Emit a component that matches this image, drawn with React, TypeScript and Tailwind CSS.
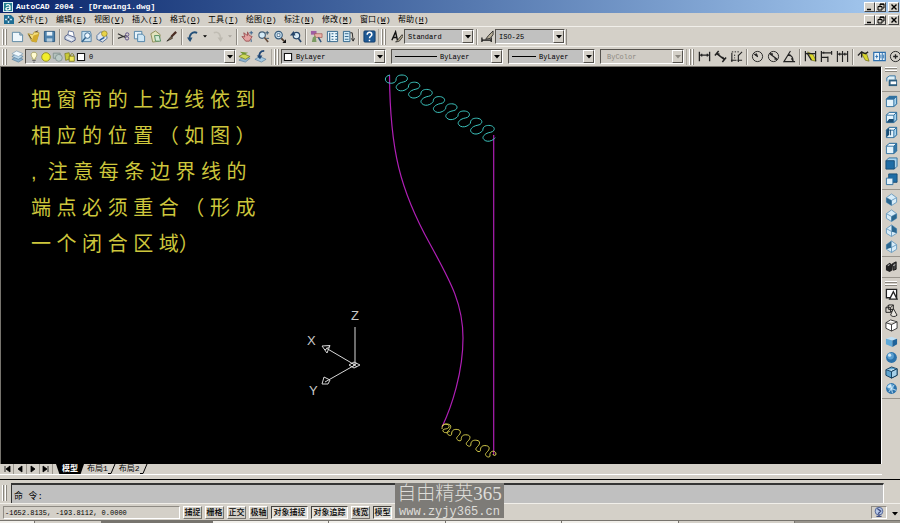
import React from "react";
import clsx from "clsx";

const INK = "#222";
const BLUE = "#2f6f9f";
const SKY = "#a9d4ef";

// 14x14 toolbar glyphs
const glyphs: Record<string, React.ReactNode> = {
  new: (
    <path d="M1.500 2.500h8l3 3v7h-11z M9.500 2.500v3h3" fill="#eef6fb" stroke="#5a86a3" />
  ),
  open: (
    <>
      <path d="M1 4l5 1 2-3 5 1-3 10-5-1z" fill="#f3dc7a" stroke="#a98c2c" strokeWidth=".8" />
      <path d="M5 12l2-6 6-2-3 9z" fill="#d4ab2c" />
      <path d="M9 2l3-1M2 5l3 5" stroke="#58462a" />
    </>
  ),
  save: (
    <>
      <path d="M1.500 1.500h11v11h-11z" fill="#4f83ad" stroke="#2b567d" />
      <path d="M4 2h6v4H4z" fill="#e8f2f8" />
      <path d="M4 9h6v3.500H4z" fill="#b6cddd" />
    </>
  ),
  print: (
    <>
      <path d="M4 6l1-5 5 1 1 5" fill="#fff" stroke="#68789c" />
      <path d="M1 7l3-2 8 3v3l-4 2-7-3z" fill="#d3dbe8" stroke="#4e5c86" />
      <path d="M3 8l6 3" stroke="#fff" />
    </>
  ),
  preview: (
    <>
      <path d="M2 1.500h9l1 3v8H2z" fill="#c8e2f2" stroke="#5784a6" />
      <circle cx="8" cy="6" r="3" fill="#eef8ff" stroke="#35668e" />
      <path d="M6 8l-4 5" stroke="#35668e" strokeWidth="1.600" />
    </>
  ),
  publish: (
    <>
      <path d="M1 6l4-4 6 2 1 5-5 4-6-3z" fill="#dfe6ef" stroke="#52709a" />
      <circle cx="9" cy="4" r="3" fill="#e8d34a" stroke="#8a7a1d" strokeWidth=".7" />
      <path d="M4 11l5-3" stroke="#2f5f99" strokeWidth="1.600" />
    </>
  ),
  cut: (
    <>
      <path d="M1 4l8 4M1 9l9-3" stroke="#333" strokeWidth="1.200" />
      <circle cx="11" cy="4.800" r="1.800" fill="none" stroke="#5b4c86" />
      <circle cx="10.800" cy="9" r="1.800" fill="none" stroke="#5b4c86" />
    </>
  ),
  copy: (
    <>
      <path d="M1.500 1.500h8v8h-8z" fill="#e7f3fa" stroke="#4f83a8" />
      <path d="M5 4.500h5l2.500 2v6H5z" fill="#cfe7f5" stroke="#4f83a8" />
    </>
  ),
  paste: (
    <>
      <path d="M2 4l5-3 5 4-1 7-7 1z" fill="#e2e3bd" stroke="#8d8c55" />
      <path d="M6 6h5l1.500 6H7z" fill="#d7ebd7" stroke="#4f8a5c" />
    </>
  ),
  brush: (
    <>
      <path d="M12 2L7 7" stroke="#4a2c22" strokeWidth="2.400" />
      <path d="M7 6.500L2 12l6-3z" fill="#8a6a48" stroke="#222" strokeWidth=".8" />
    </>
  ),
  undo: (
    <>
      <path d="M12 3C7 1 3 5 4 11" fill="none" stroke="#234f78" strokeWidth="2" />
      <path d="M1 8l3.500 5L7 8z" fill="#234f78" />
    </>
  ),
  redo: (
    <>
      <path d="M3 3c5-2 8 2 7 8" fill="none" stroke="#c1bdb4" strokeWidth="1.800" />
      <path d="M7 8l3.500 5L13 8z" fill="#bdb9b0" />
    </>
  ),
  pan: (
    <>
      <path d="M3 3l4 3V2l2 4 3 1-3 5H5L1 7l3 .5z" fill="#e3a3a1" stroke="#96494c" strokeWidth=".9" />
      <path d="M11 1v4M9 3h4M11 10v3" stroke="#365f8d" />
    </>
  ),
  zoom: (
    <>
      <circle cx="5.500" cy="5.500" r="3.500" fill="#d5ebf7" stroke="#455f78" strokeWidth="1.200" />
      <path d="M8 8l4 5" stroke="#654c3c" strokeWidth="1.800" />
      <path d="M9 3h4M11 1v4M10 9h3" stroke="#30536e" />
    </>
  ),
  zoomWindow: (
    <>
      <circle cx="6" cy="5.500" r="4" fill="#cfe7f5" stroke="#365a7b" strokeWidth="1.200" />
      <path d="M4.500 4h3v3h-3z" fill="#fff" stroke="#365a7b" strokeWidth=".8" />
      <path d="M9 9l3 3" stroke="#4d3a2c" strokeWidth="1.800" />
      <path d="M14 10v4h-4z" fill="#111" />
    </>
  ),
  zoomPrev: (
    <>
      <circle cx="8" cy="6" r="3.500" fill="#d8eaf5" stroke="#27466b" strokeWidth="1.300" />
      <path d="M10 9l3 4" stroke="#27466b" strokeWidth="1.800" />
      <path d="M1 6l4-5 2 5z" fill="#27466b" />
    </>
  ),
  props: (
    <>
      <path d="M1 1h6v4H1z" fill="#9f5fa3" />
      <path d="M5 4h8v4H5z" fill="#e9b3aa" stroke="#9c5048" strokeWidth=".7" />
      <path d="M3 8l3-2 1 7H2z" fill="#7b9b62" />
      <path d="M9 8l3 5" stroke="#31557c" strokeWidth="1.600" />
    </>
  ),
  center: (
    <>
      <path d="M1.500 1.500h11v11h-11z" fill="#e6f4fb" stroke="#2e6389" />
      <path d="M4 3v9M6 4h2M10 4h2M6 7h2M10 7h2M6 10h2M10 10h2" stroke="#2e6389" strokeWidth="1.200" />
    </>
  ),
  palettes: (
    <>
      <path d="M1.500 1.500h7v11h-7z" fill="#d4ebf7" stroke="#2e6389" />
      <path d="M3 4h4M3 7h4M3 10h4" stroke="#2e6389" />
      <path d="M9 3h2l1 8M10 9l2 3 1.500-3" fill="none" stroke="#222" />
    </>
  ),
  help: (
    <>
      <rect x="1" y="1" width="12" height="12" rx="1" fill="#1f5a95" stroke="#123c69" />
      <path d="M4.500 5c0-3.500 5-3.200 5 0 0 1.800-2.500 1.500-2.500 4M7 10.500v1.500" fill="none" stroke="#fff" strokeWidth="1.600" />
    </>
  ),
  textStyle: (
    <>
      <path d="M2 11L6 2l2 9M3.500 8h4" fill="none" stroke="#111" strokeWidth="1.500" />
      <path d="M13 5l-5 6-2 2 4-1 4-5z" fill="#b0a68c" stroke="#222" strokeWidth=".8" />
    </>
  ),
  dimStyle: (
    <>
      <path d="M1 8v5M11 8v5M1 11h10" stroke="#111" strokeWidth="1.300" />
      <path d="M13 1L8 6l-3 4 5-1 3-4z" fill="#b7ae98" stroke="#222" strokeWidth=".9" />
    </>
  ),
  layers: (
    <>
      <path d="M1 10l5-3 7 3-5 3z" fill="#8fb4cf" stroke="#557c9c" strokeWidth=".7" />
      <path d="M1 7l5-3 7 3-5 3z" fill="#bcd8ea" stroke="#557c9c" strokeWidth=".7" />
      <path d="M1 4l5-3 7 3-5 3z" fill="#f1f8fc" stroke="#7b9cb5" strokeWidth=".7" />
    </>
  ),
  layerCurrent: (
    <>
      <path d="M1 11l5-4 7 2-5 4z" fill="#8fb4cf" stroke="#557c9c" strokeWidth=".7" />
      <path d="M1 7l5-3 7 3-5 3z" fill="#cfd95a" stroke="#727a24" strokeWidth=".8" />
      <path d="M2 2l9 1-5 2z" fill="#71962e" />
    </>
  ),
  layerPrev: (
    <>
      <path d="M1 10l5-3 7 3-5 3z" fill="#a6c9e0" stroke="#557c9c" strokeWidth=".7" />
      <path d="M11 1C7 1 5 4 6 8" fill="none" stroke="#1f4674" strokeWidth="2" />
      <path d="M3 6l3.500 4L9 6z" fill="#1f4674" />
    </>
  ),
  bulb: (
    <>
      <path d="M7 1.500c4 0 4 4 2 6v2H5v-2c-2-2-2-6 2-6z" fill="#fffbd0" stroke="#99904a" strokeWidth=".8" />
      <path d="M5 11h4M6 13h2" stroke="#555" />
    </>
  ),
  sun: <circle cx="7" cy="7" r="5" fill="#f2ee2c" stroke="#8c8a1d" />,
  freeze: (
    <>
      <path d="M1.500 2.500h8v6h-8z" fill="#b5c2bd" stroke="#80908d" />
      <circle cx="8" cy="8" r="4" fill="#bccbc7" stroke="#80908d" />
    </>
  ),
  lock: (
    <>
      <path d="M1 3l5-1 1 7-5 2z" fill="#c9c939" stroke="#77761a" strokeWidth=".8" />
      <path d="M6 6h6v6H6z" fill="#f0e85a" stroke="#77761a" />
      <path d="M7.500 6c0-4 4-4 4 0" fill="none" stroke="#77761a" />
    </>
  ),
  swatch: <path d="M2 2h10v10H2z" fill="#fff" stroke="#111" strokeWidth="1.500" />,
  dimLinear: (
    <path d="M1.500 2v10M12.500 2v10M2 5.500h10M4 4v3M10 4v3" fill="none" stroke={INK} strokeWidth="1.400" />
  ),
  dimAligned: (
    <path d="M1 6l4-5M9 13l4-5M3 4l8 6M3 4l3 .5M11 10l-2-2.500" fill="none" stroke={INK} strokeWidth="1.600" />
  ),
  dimOrdinate: (
    <>
      <path d="M2 3v10M1 11h6M9 5v8M8 11h5M9 6l4-4" fill="none" stroke={INK} strokeWidth="1.200" />
      <path d="M2 2h9M5 5v4" stroke={INK} strokeDasharray="1.500 1.500" />
    </>
  ),
  dimRadius: (
    <>
      <circle cx="7" cy="7" r="5.500" fill="none" stroke={INK} />
      <path d="M7.500 7.500L3 4M7 7L6 4 4 5z" fill={INK} stroke={INK} />
    </>
  ),
  dimDiameter: (
    <>
      <circle cx="7" cy="7" r="5.500" fill="none" stroke={INK} />
      <path d="M3 4l8 6M3.500 4l3 .5M10.500 10L8 9.500" stroke={INK} strokeWidth="1.300" />
    </>
  ),
  dimAngular: (
    <path d="M13 12.500H1L8 1M5 6c4-1 6 2 6 6M5 6l3-1M11 12l-2-3" fill="none" stroke={INK} strokeWidth="1.200" />
  ),
  dimQuick: (
    <>
      <path d="M4 2l6 3 3 7-5-1z" fill="#d9d62c" stroke="#66651b" strokeWidth=".7" />
      <path d="M1.500 1v11M12.500 1v11M2 4h10M3 3l5 8" fill="none" stroke={INK} strokeWidth="1.300" />
    </>
  ),
  dimBase: (
    <path d="M1.500 1v12M2 3h11M2 8h6M8.500 7v6M12.500 1v4M4 2v2" fill="none" stroke={INK} strokeWidth="1.300" />
  ),
  dimCont: (
    <path d="M1.500 1v12M7 1v12M12.500 1v12M2 4.500h11M4 3v3M9.500 3v3" fill="none" stroke={INK} strokeWidth="1.200" />
  ),
  leader: (
    <>
      <path d="M5 4l5-1 3 9-4-1z" fill="#d9d62c" stroke="#66651b" strokeWidth=".7" />
      <path d="M1 6l4-4 4 2 3-2M5 2v6" fill="none" stroke={INK} strokeWidth="1.400" />
    </>
  ),
  tolerance: (
    <>
      <path d="M.8 2.500h12.400v9H.8z" fill="#eaf4fb" stroke="#2d6fae" strokeWidth="1.300" />
      <path d="M7 3v8M10 3v8" stroke="#2d6fae" />
      <path d="M2.500 7h3M4 5v4M8.500 5v4M11.500 5v4" stroke="#2d6fae" />
    </>
  ),
  centerMark: (
    <>
      <circle cx="7" cy="7" r="5.500" fill="none" stroke={INK} />
      <path d="M4.500 7h5M7 4.500v5" stroke={INK} strokeWidth="1.400" />
    </>
  ),
  namedViews: (
    <>
      <path d="M2 8V4l3-2h6v4" fill="#dff0f8" stroke={BLUE} />
      <path d="M4 6h9v7H4z" fill="#2e5e7f" />
      <path d="M6 8h6v3H6z" fill="#fff" />
    </>
  ),
  top: <Cube top={BLUE} />,
  bottom: <Cube base />,
  left: <Cube side="left" />,
  right: <Cube side="right" />,
  front: (
    <>
      <path d="M1 4l3-3h9v9l-3 3" fill={SKY} stroke={BLUE} />
      <path d="M1 4h9v9H1z" fill="#1f6da6" stroke="#194d75" />
    </>
  ),
  back: (
    <>
      <path d="M4 1h9v9H4z" fill="#1f6da6" stroke="#194d75" />
      <path d="M1.500 5.500h7v7h-7z" fill="#dff0fa" stroke={BLUE} />
    </>
  ),
  sw: <Diamond dark="left" />,
  se: <Diamond dark="right" />,
  ne: <Diamond dark="topRight" />,
  nw: <Diamond dark="topLeft" />,
  camera: (
    <>
      <path d="M1 6l4-3 3 2v6l-3 2-4-2z" fill="#222" />
      <path d="M8 4l4-2v8l-3 1z" fill="#444" stroke="#111" />
      <path d="M3 6l2-1M9 6l2-1" stroke="#ddd" />
    </>
  ),
  wire2d: (
    <>
      <path d="M1.500 1.500h11v9h-11z" fill="#fff" stroke={INK} strokeWidth="1.400" />
      <path d="M5 12l4-8 4 8z" fill="#fff" stroke={INK} strokeWidth="1.400" />
    </>
  ),
  wire3d: (
    <>
      <path d="M1 4l3-3h5v5L6 9H1zM1 4h5v5M6 4l3-3M4 1v5H9" fill="none" stroke={INK} />
      <path d="M9 5l-3 7c2 2 5 2 7 0z" fill="#e9e6df" stroke={INK} />
    </>
  ),
  hidden: (
    <path d="M1 4l5-3 7 2v7l-6 3-6-3zM1 4l6 2 6-3M7 6v7" fill="#fff" stroke="#333" />
  ),
  flat: (
    <>
      <path d="M1 4l6-2 6 2-5 2z" fill="#bfe0f5" />
      <path d="M1 4l7 2v7l-7-3z" fill="#5fa9d8" />
      <path d="M8 6l5-2v6l-5 3z" fill="#1d629a" />
    </>
  ),
  gouraud: <Ball />,
  flatEdges: (
    <>
      <path d="M1 4l6-3 6 2v7l-6 3-6-3z" fill="#5fa5d0" stroke="#123d5d" />
      <path d="M1 4l6 2 6-3" fill="#c6e4f5" stroke="#123d5d" />
      <path d="M7 6l6-3v7l-6 3z" fill="#a7d0e8" stroke="#123d5d" />
    </>
  ),
  gouraudEdges: (
    <>
      <Ball />
      <path d="M2 5l10 4M4 11l6-8M6 2l2 10" stroke="#d9eefa" strokeWidth=".9" />
    </>
  ),
  tray: (
    <>
      <circle cx="7" cy="6" r="4.500" fill="#b9c9e8" stroke="#44598f" />
      <path d="M5 3l4 3-3 3M4 12h6M7 10v2" fill="none" stroke="#3f4d80" strokeWidth="1.500" />
    </>
  ),
};

function Cube({ top, base, side }: { top?: string; base?: boolean; side?: "left" | "right" }) {
  return (
    <>
      <path d="M1.500 4.500l3-3h8v8l-3 3h-8z" fill="#e4f3fb" stroke={BLUE} />
      <path d="M1.500 4.500l3-3h8l-3 3z" fill={top ?? "#f4fafd"} stroke={BLUE} />
      {base && <path d="M1.500 12.500l3-4h8l-3 4z" fill="#194d75" />}
      {side === "left" && <path d="M1.500 4.500l3-3v8l-3 3z" fill="#194d75" />}
      <path
        d="M9.500 4.500l3-3v8l-3 3z"
        fill={side === "right" ? "#3678a7" : SKY}
        stroke={BLUE}
      />
      {side === "left" && <path d="M6 4v6" stroke="#194d75" />}
    </>
  );
}

const diamondFaces = {
  left: "M1.500 5L7 8v5.500L1.500 10z",
  right: "M7 8l5.500-3v5L7 13.500z",
  topRight: "M7 1l5.500 4v5L7 8z",
  topLeft: "M7 1L1.500 5v5L7 8z",
};

function Diamond({ dark }: { dark: keyof typeof diamondFaces }) {
  return (
    <>
      <path d="M7 1l5.500 4v5L7 13.500 1.500 10V5z" fill="#d8ecf8" stroke="#6a9cbf" />
      <path d="M1.500 5L7 8l5.500-3M7 8v5.500" fill="none" stroke="#6a9cbf" />
      <path d={diamondFaces[dark]} fill="#2a668f" />
    </>
  );
}

function Ball() {
  return (
    <>
      <circle cx="7" cy="7" r="5.800" fill="#2b72ab" />
      <circle cx="6" cy="5.500" r="3.600" fill="#5a9fd0" />
      <circle cx="5" cy="4.500" r="1.700" fill="#d2eaf8" />
    </>
  );
}

function Glyph({ name, size = "size-[13px]" }: { name: string; size?: string }) {
  return (
    <svg viewBox="0 0 14 14" className={clsx("shrink-0", size)} aria-hidden="true">
      {glyphs[name]}
    </svg>
  );
}

function ToolButton({ name }: { name: string }) {
  return (
    <button aria-label={name} className="flex h-[15px] w-4 shrink-0 items-center justify-center">
      <Glyph name={name} />
    </button>
  );
}

function Caret({ className = "h-1 w-1.5" }: { className?: string }) {
  return (
    <svg viewBox="0 0 6 4" className={className} aria-hidden="true">
      <path d="M0 0h6L3 3.500z" fill="currentColor" />
    </svg>
  );
}

function Separator() {
  return (
    <div className="flex h-4 w-[5px] shrink-0 justify-center">
      <div className="w-0.5 border-l border-[#8f8b84] bg-[#f4f2ed]" />
    </div>
  );
}

function Grip() {
  return (
    <div className="mx-0.5 flex h-4 shrink-0 gap-px">
      <div className="w-0.5 border-r border-[#8a867e] bg-white" />
      <div className="w-0.5 border-r border-[#8a867e] bg-white" />
    </div>
  );
}

// "|" is a divider, "v" is a drop-down arrow, everything else is a glyph name
function Tools({ items }: { items: string[] }) {
  return (
    <>
      {items.map((item, i) => {
        if (item === "|") return <Separator key={i} />;
        if (item === "v")
          return (
            <button key={i} aria-label="more" className="flex h-4 w-[9px] items-center justify-center">
              <Caret className={clsx("h-[3px] w-1", items[i - 1] === "redo" ? "text-[#aaa69e]" : "text-black")} />
            </button>
          );
        return <ToolButton key={i} name={item} />;
      })}
    </>
  );
}

interface ComboProps {
  label: string;
  value: string;
  className: string;
  disabled?: boolean;
  children?: React.ReactNode;
}

function Combo({ label, value, className, disabled, children }: ComboProps) {
  return (
    <div
      className={clsx(
        "flex h-[15px] shrink-0 items-center border border-r-white border-b-white border-t-[#55524d] border-l-[#55524d]",
        disabled ? "bg-[#d0ccc5] text-[#8d8982]" : "bg-[#c1c1c0] text-black",
        className,
      )}
    >
      {children}
      <select
        aria-label={label}
        disabled={disabled}
        className="h-full min-w-0 flex-1 appearance-none bg-transparent px-[3px] text-[7px] leading-3 outline-none"
      >
        <option>{value}</option>
      </select>
      <span className="flex h-full w-[11px] shrink-0 items-center justify-center border border-t-white border-l-white border-r-[#55524d] border-b-[#55524d] bg-[#d4d0c8]">
        <Caret />
      </span>
    </div>
  );
}

function WindowButtons() {
  const frame =
    "flex h-[10px] w-[11px] items-center justify-center border border-t-white border-l-white border-r-[#444] border-b-[#444] bg-[#d4d0c8]";
  return (
    <div className="ml-auto flex">
      <button aria-label="minimize" className={frame}>
        <svg viewBox="0 0 8 8" className="size-2"><path d="M1 6.500h4" stroke="#000" strokeWidth="1.500" /></svg>
      </button>
      <button aria-label="restore" className={frame}>
        <svg viewBox="0 0 8 8" className="size-2">
          <path d="M3 3V1h4v4H5.500M1 3.500h4v3.500H1zM3 1.300h4M1 3.600h4" fill="none" stroke="#000" />
        </svg>
      </button>
      <button aria-label="close" className={clsx(frame, "ml-0.5")}>
        <svg viewBox="0 0 8 8" className="size-2"><path d="M1.500 1.500l5 5M6.500 1.500l-5 5" stroke="#000" strokeWidth="1.400" /></svg>
      </button>
    </div>
  );
}

const menus = [
  ["文件", "F"], ["编辑", "E"], ["视图", "V"], ["插入", "I"], ["格式", "O"], ["工具", "T"],
  ["绘图", "D"], ["标注", "N"], ["修改", "M"], ["窗口", "W"], ["帮助", "H"],
];

const standardTools = [
  "new", "open", "save", "|", "print", "preview", "publish", "|",
  "cut", "copy", "paste", "brush", "|", "undo", "v", "redo", "v", "|",
  "pan", "zoom", "zoomWindow", "zoomPrev", "|", "props", "center", "palettes", "|", "help",
];

const dimensionTools = [
  "dimLinear", "dimAligned", "dimOrdinate", "|", "dimRadius", "dimDiameter", "dimAngular", "|",
  "dimQuick", "dimBase", "dimCont", "|", "leader", "tolerance", "centerMark",
];

const noteLines = [
  "把 窗 帘 的 上 边 线 依 到",
  "相 应 的 位 置 （ 如 图 ）",
  ",  注 意 每 条 边 界 线 的",
  "端 点 必 须 重 合 （ 形 成",
  "一 个 闭 合 区 域）",
];

const statusModes = [
  { label: "捕捉", on: false },
  { label: "栅格", on: false },
  { label: "正交", on: false },
  { label: "极轴", on: false },
  { label: "对象捕捉", on: true },
  { label: "对象追踪", on: true },
  { label: "线宽", on: false },
  { label: "模型", on: true },
];

// One fold of the curtain edge, as relative cubic segments
const tightFold = [
  [0, -4, 3, -5, 6, -5],
  [4, 0, 6.5, 2.5, 5, 5],
  [-1.5, 2.5, -5, 1.5, -8, 3.5],
  [-3, 2, -3.5, 4, -2, 5.5],
  [1.5, 2, 5, 2.5, 8, 1],
  [2.5, -1.5, 3, -2, 3.4, -2.8],
];

const openFold = [
  [0, -4, 2, -5, 4.5, -5],
  [5, 0, 5, 3, 3, 5.5],
  [-2, 2, -3.5, 3.5, -1.5, 5],
  [1.5, 1.5, 3.6, 1, 3.6, -0.1],
];

function folds(unit: number[][], x: number, y: number, count: number) {
  let d = `M${x} ${y}`;
  for (let i = 0; i < count; i++) {
    unit.forEach((c) => {
      d += ` c${c.join(" ")}`;
    });
  }
  return d;
}

function Drawing() {
  return (
    <svg width="881" height="398" viewBox="1 67 881 398" className="absolute top-0 left-0" fill="none">
      <g stroke="#b01fb6" strokeWidth="1.200">
        <path d="M389.500 75C390 150 400 190 430 244C452 284 463 305 463 338C463 372 452 406 442 427" />
        <path d="M493.700 135v320" />
      </g>
      <g stroke="#3cc4be">
        <path d="M390 75c-6 1-6 7-1 8 4 1 7-1 7-3" />
        <path d={folds(tightFold, 396, 80, 8)} />
      </g>
      <g stroke="#d6cd4c">
        <path d="M442 426c2-3 8-2 7 1s-7 1-6 4 6 1 7 0" />
        <path d={folds(openFold, 442, 429, 5)} />
        <path d="M490 456c-1-6 6-6 6-2 0 2-3 2-3 0" />
      </g>
      <g stroke="#d8d8d8">
        <path d="M355 327v38M355 365l-29-17M355 365l-30 17" />
        <path d="M322 346l8-.5-3 7.500zM330 346l-5 4M322 384l2-7 6 3-2 4z" />
        <path d="M349 365l5-3 6 3-6 3zM352 363l5 4M352 367l5-4" />
      </g>
      <g fill="#c8c8c8" fontSize="13" fontFamily="'Liberation Sans', sans-serif">
        <text x="351" y="320">Z</text>
        <text x="307" y="345">X</text>
        <text x="309" y="395">Y</text>
      </g>
    </svg>
  );
}

function SideRule() {
  return <div className="my-0.5 h-px w-full bg-[#99958d]" />;
}

function SideGrip() {
  return (
    <div className="my-px flex w-3 flex-col gap-px">
      <div className="h-0.5 border-b border-[#8a867e] bg-white" />
      <div className="h-0.5 border-b border-[#8a867e] bg-white" />
    </div>
  );
}

function SideTools({ names, className }: { names: string[]; className: string }) {
  return (
    <div className={clsx("flex flex-col justify-between", className)}>
      {names.map((name) => (
        <ToolButton key={name} name={name} />
      ))}
    </div>
  );
}

export default function App() {
  return (
    <div className="flex h-screen flex-col overflow-hidden bg-[#d4d0c8] font-['Liberation_Mono','Noto_Sans_CJK_SC',monospace] text-[8px] leading-3 text-black">
      {/* Title bar */}
      <header className="flex h-[13px] shrink-0 items-center gap-[3px] bg-linear-to-r from-[#0a246a] to-[#a6caf0] pr-px pl-[3px] text-white">
        <svg viewBox="0 0 10 10" className="size-[10px]" aria-hidden="true">
          <rect width="10" height="10" fill="#d9f0f2" />
          <rect x="1" y="1" width="8" height="8" fill="#247f92" />
          <path d="M3 3.500c2-1.500 4-.8 4 1V8M7 5C2 5 2 8 4.500 8 6 8 7 7 7 6" fill="none" stroke="#fff" strokeWidth="1.200" />
        </svg>
        <h1 className="font-bold whitespace-nowrap">AutoCAD 2004 - [Drawing1.dwg]</h1>
        <WindowButtons />
      </header>

      {/* Menu bar */}
      <nav className="flex h-[13px] shrink-0 items-center pr-px pl-[3px]">
        <svg viewBox="0 0 11 11" className="mr-1 size-[11px]" aria-hidden="true">
          <path d="M1 1h7l3 3v6H1z" fill="#1e6d94" />
          <path d="M5.500 2v7M2 5.500h7" stroke="#bfe6f5" strokeWidth="1.400" />
          <circle cx="5.500" cy="5.500" r="1.200" fill="#11364d" />
        </svg>
        <div className="flex gap-2">
          {menus.map(([label, key]) => (
            <button key={key} className="w-[30px] whitespace-nowrap">
              {label}(<u>{key}</u>)
            </button>
          ))}
        </div>
        <WindowButtons />
      </nav>

      {/* Standard + styles toolbars */}
      <div className="flex h-5 shrink-0 items-center border-t border-[#f1efea]">
        <div className="flex items-center border-r border-[#aaa69e] pr-px">
          <Grip />
          <Tools items={standardTools} />
        </div>
        <div className="flex items-center border-r border-[#8f8b84] pr-px">
          <Grip />
          <ToolButton name="textStyle" />
          <Combo label="text style" value="Standard" className="w-[70px]" />
          <Separator />
          <ToolButton name="dimStyle" />
          <Combo label="dimension style" value="ISO-25" className="w-[70px]" />
        </div>
      </div>

      {/* Layers, properties and dimension toolbars */}
      <div className="flex h-5 shrink-0 items-center overflow-hidden border-t border-[#f1efea]">
        <div className="flex items-center border-r border-[#aaa69e] pr-[3px]">
          <Grip />
          <ToolButton name="layers" />
          <Combo label="layer" value="0" className="w-[211px] pl-0.5">
            <Glyph name="bulb" size="size-3" />
            <Glyph name="sun" size="size-3" />
            <Glyph name="freeze" size="size-3" />
            <Glyph name="lock" size="size-3" />
            <Glyph name="swatch" size="size-2.5" />
          </Combo>
          <ToolButton name="layerCurrent" />
          <ToolButton name="layerPrev" />
        </div>
        <div className="flex items-center border-r border-[#aaa69e] pr-0.5">
          <Grip />
          <div className="flex items-center gap-[5px]">
            <Combo label="color" value="ByLayer" className="w-[105px] pl-px">
              <Glyph name="swatch" size="size-2.5" />
            </Combo>
            <Combo label="linetype" value="ByLayer" className="w-[112px] pl-[3px]">
              <span className="h-px w-[42px] shrink-0 bg-black" />
            </Combo>
            <Combo label="lineweight" value="ByLayer" className="w-[87px] pl-[3px]">
              <span className="h-px w-6 shrink-0 bg-black" />
            </Combo>
            <Combo label="plot style" value="ByColor" className="w-[84px] pl-[3px]" disabled />
          </div>
        </div>
        <div className="flex items-center">
          <Grip />
          <Tools items={dimensionTools} />
        </div>
      </div>

      <div className="flex min-h-0 flex-1">
        <div className="flex min-w-0 flex-1 flex-col">
          <main className="relative min-h-0 flex-1 overflow-hidden border-t border-r border-l border-t-[#77746e] border-r-white border-l-[#77746e] bg-black">
            <Drawing />
            <p className="relative pt-[15px] pl-[30px] font-['Liberation_Sans','Noto_Sans_CJK_SC',sans-serif] text-xl leading-9 whitespace-pre text-[#cdc63c]">
              {noteLines.join("\n")}
            </p>
          </main>
          {/* Layout tabs */}
          <div className="flex h-[11px] shrink-0 items-center border-b border-white pl-px">
            {["M3 1v6M8 1v6L4 4z", "M7 1v6L3 4z", "M3 1v6l4-3z", "M2 1v6l4-3zM7 1v6"].map((d, i) => (
              <button key={d} aria-label={["first", "previous", "next", "last"][i]} className="flex h-[10px] w-[13px] items-center justify-center border-r border-[#99958d]">
                <svg viewBox="0 0 10 8" className="h-2 w-[10px]"><path d={d} fill="#000" stroke="#000" strokeWidth=".8" /></svg>
              </button>
            ))}
            <button className="ml-[3px] h-[10px] w-7 bg-black leading-[10px] font-bold text-white [clip-path:polygon(0_0,100%_0,88%_100%,12%_100%)]">
              模型
            </button>
            {["布局1", "布局2"].map((tab) => (
              <React.Fragment key={tab}>
                <button className="pl-[3px] leading-[10px]">{tab}</button>
                <svg viewBox="0 0 8 10" className="h-[10px] w-2" aria-hidden="true"><path d="M7 0L3 9.500H0" fill="none" stroke="#000" /></svg>
              </React.Fragment>
            ))}
          </div>
        </div>

        {/* View + shade toolbars */}
        <aside className="flex w-[18px] shrink-0 flex-col items-center">
          <SideGrip />
          <SideTools names={["namedViews"]} className="h-4" />
          <SideRule />
          <SideTools names={["top", "bottom", "left", "right", "front", "back"]} className="h-[93px]" />
          <SideRule />
          <SideTools names={["sw", "se", "ne", "nw"]} className="h-[62px]" />
          <SideRule />
          <SideTools names={["camera"]} className="h-4" />
          <SideRule />
          <SideGrip />
          <SideTools names={["wire2d", "wire3d", "hidden", "flat", "gouraud", "flatEdges", "gouraudEdges"]} className="h-[109px]" />
          <SideRule />
        </aside>
      </div>

      {/* Command line */}
      <div className="mt-1 flex h-6 shrink-0 border-t border-black pt-[3px]">
        <div className="pt-0.5">
          <Grip />
        </div>
        <label className="ml-0.5 flex min-w-0 flex-1 items-end border-t-2 border-r border-l border-t-[#333] border-r-white border-l-[#333] bg-[#c0c0c0] pl-0.5">
          <span className="text-[9px] whitespace-pre">命 令:</span>
          <input aria-label="command" className="h-3 min-w-0 flex-1 bg-transparent px-1 outline-none" />
        </label>
        <div className="w-4" />
      </div>

      {/* Status bar */}
      <footer className="relative flex h-[17px] shrink-0 items-center gap-[3px] border-t border-[#f1efea] pr-0.5 pl-[3px]">
        <output className="h-[13px] w-[177px] border border-t-[#8f8b84] border-r-white border-b-white border-l-[#8f8b84] pl-px text-[7px] leading-3">
          -1652.8135, -193.8112, 0.0000
        </output>
        {statusModes.map((mode) => (
          <button
            key={mode.label}
            aria-pressed={mode.on}
            className={clsx(
              "h-[13px] border leading-[11px] font-medium whitespace-nowrap",
              mode.label.length > 2 ? "w-[37px]" : "w-[19px]",
              mode.on
                ? "border-t-[#44423e] border-r-white border-b-white border-l-[#44423e] bg-[#e3e0da]"
                : "border-t-white border-r-[#77746e] border-b-[#77746e] border-l-white",
            )}
          >
            {mode.label}
          </button>
        ))}
        <button aria-label="tray" className="ml-auto flex h-[13px] w-4 items-center justify-center border border-t-[#8f8b84] border-r-white border-b-white border-l-[#8f8b84]">
          <Glyph name="tray" size="size-3" />
        </button>
        <Caret className="mt-1 ml-0.5 h-1 w-1.5" />
        {/* Watermark */}
        <div className="absolute bottom-0.5 left-[395px] flex h-[35px] w-[109px] flex-col items-center justify-end bg-[#7d7b77] whitespace-nowrap text-[#deddd9]">
          <span className="font-['Liberation_Serif','Noto_Sans_CJK_SC',serif] text-[19px] leading-6 font-light">自由精英365</span>
          <span className="text-xs leading-3">www.zyjy365.cn</span>
        </div>
      </footer>

      <div className="flex h-[3px] shrink-0 gap-px bg-[#77746e] pt-px">
        <div className="w-[34px] bg-[#f1efea]" />
        <div className="w-[66px] bg-[#d4d0c8]" />
        <div className="w-[110px] bg-[#77746e]" />
        <div className="flex-1 bg-[#f1efea]" />
        <div className="flex-1 bg-[#f1efea]" />
        <div className="flex-1 bg-[#f1efea]" />
        <div className="flex-1 bg-[#f1efea]" />
        <div className="flex-1 bg-[#d4d0c8]" />
        <div className="w-[105px] bg-[#99958d]" />
      </div>
    </div>
  );
}
